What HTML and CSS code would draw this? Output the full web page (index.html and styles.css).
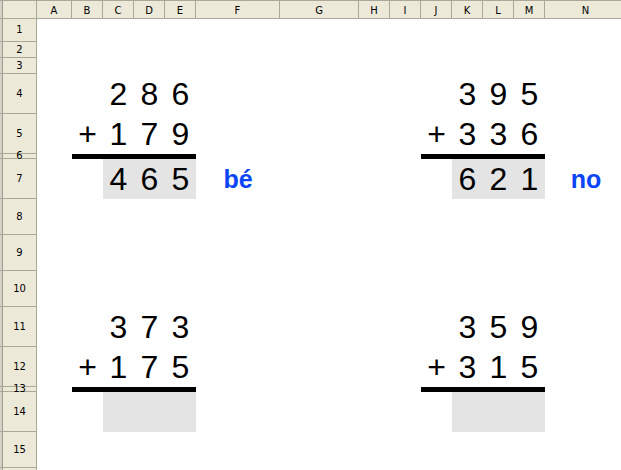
FILE: index.html
```html
<!DOCTYPE html>
<html>
<head>
<meta charset="utf-8">
<link rel="stylesheet" href="styles.css">
</head>
<body>
<div class="sheet">
  <div class="row hrow">
    <div class="hd corner"></div>
    <div class="hd">A</div><div class="hd">B</div><div class="hd">C</div><div class="hd">D</div><div class="hd">E</div>
    <div class="hd">F</div><div class="hd">G</div><div class="hd">H</div><div class="hd">I</div><div class="hd">J</div>
    <div class="hd">K</div><div class="hd">L</div><div class="hd">M</div><div class="hd">N</div>
  </div>
  <div class="row r1"><div class="rh">1</div></div>
  <div class="row r2"><div class="rh">2</div></div>
  <div class="row r3"><div class="rh">3</div></div>
  <div class="row r4"><div class="rh">4</div>
    <div class="cell num cC">2</div><div class="cell num cD">8</div><div class="cell num cE">6</div>
    <div class="cell num cK">3</div><div class="cell num cL">9</div><div class="cell num cM">5</div>
  </div>
  <div class="row r5"><div class="rh">5</div>
    <div class="cell num cB">+</div><div class="cell num cC">1</div><div class="cell num cD">7</div><div class="cell num cE">9</div>
    <div class="cell num cJ">+</div><div class="cell num cK">3</div><div class="cell num cL">3</div><div class="cell num cM">6</div>
  </div>
  <div class="row r6"><div class="rh">6</div>
    <div class="bar barL"></div><div class="bar barR"></div>
  </div>
  <div class="row r7"><div class="rh">7</div>
    <div class="cell num fill cC">4</div><div class="cell num fill cD">6</div><div class="cell num fill cE">5</div>
    <div class="cell verdict cF">bé</div>
    <div class="cell num fill cK">6</div><div class="cell num fill cL">2</div><div class="cell num fill cM">1</div>
    <div class="cell verdict cN">no</div>
  </div>
  <div class="row r8"><div class="rh">8</div></div>
  <div class="row r9"><div class="rh">9</div></div>
  <div class="row r10"><div class="rh">10</div></div>
  <div class="row r11"><div class="rh">11</div>
    <div class="cell num cC">3</div><div class="cell num cD">7</div><div class="cell num cE">3</div>
    <div class="cell num cK">3</div><div class="cell num cL">5</div><div class="cell num cM">9</div>
  </div>
  <div class="row r12"><div class="rh">12</div>
    <div class="cell num cB">+</div><div class="cell num cC">1</div><div class="cell num cD">7</div><div class="cell num cE">5</div>
    <div class="cell num cJ">+</div><div class="cell num cK">3</div><div class="cell num cL">1</div><div class="cell num cM">5</div>
  </div>
  <div class="row r13"><div class="rh">13</div>
    <div class="bar barL"></div><div class="bar barR"></div>
  </div>
  <div class="row r14"><div class="rh">14</div>
    <div class="cell fill cC"></div><div class="cell fill cD"></div><div class="cell fill cE"></div>
    <div class="cell fill cK"></div><div class="cell fill cL"></div><div class="cell fill cM"></div>
  </div>
  <div class="row r15"><div class="rh">15</div></div>
  <div class="row r16"><div class="rh"></div></div>
</div>
</body>
</html>
```
FILE: styles.css
```css
html, body {
  margin: 0;
  padding: 0;
  background: #ffffff;
}
.sheet {
  width: 621px;
  height: 470px;
  overflow: hidden;
  background: #ffffff;
}
.row {
  display: grid;
  grid-template-columns: 37px 35px 31px 31px 31px 31px 84px 79px 31px 31px 31px 31px 31px 31px 82px;
  grid-template-rows: 100%;
  width: 627px;
}
.hrow { height: 19px; }
.r1 { height: 23px; }
.r2, .r3 { height: 16px; }
.r4, .r5, .r7, .r11, .r12, .r14 { height: 40px; }
.r6, .r13 { height: 5px; }
.r8, .r9, .r10, .r15 { height: 36px; }
.r16 { height: 20px; }

.hd, .rh {
  box-sizing: border-box;
  background: #ece9d8;
  font-family: "DejaVu Sans", Verdana, sans-serif;
  font-size: 10px;
  color: #000;
  display: flex;
  align-items: center;
  justify-content: center;
  border-right: 1px solid #aca899;
  border-bottom: 1px solid #aca899;
}
.hd {
  border-top: 1px solid #aca899;
  padding-top: 1px;
}
.corner, .rh {
  box-shadow: inset 2px 0 0 #d6d3c6, inset 3px 0 0 #9c998d;
  padding-left: 3px;
}
.rh {
  grid-column: 1;
  overflow: visible;
  line-height: 1;
  position: relative;
  z-index: 1;
  white-space: nowrap;
}

.cell {
  grid-row: 1;
  display: flex;
  align-items: flex-end;
  justify-content: center;
  box-sizing: border-box;
}
.num {
  font-family: "Liberation Sans", Arial, sans-serif;
  font-size: 32px;
  line-height: 32px;
  padding-bottom: 4px;
  color: #000;
}
.fill { background: #e4e4e4; }
.verdict {
  font-family: "Liberation Sans", Arial, sans-serif;
  font-weight: bold;
  font-size: 25px;
  line-height: 25px;
  padding-bottom: 7px;
  color: #0a46f5;
}
.bar {
  grid-row: 1;
  background: #000;
}
.barL { grid-column: 3 / 7; }
.barR { grid-column: 11 / 15; }

.cB { grid-column: 3; }
.cC { grid-column: 4; }
.cD { grid-column: 5; }
.cE { grid-column: 6; }
.cF { grid-column: 7; }
.cJ { grid-column: 11; }
.cK { grid-column: 12; }
.cL { grid-column: 13; }
.cM { grid-column: 14; }
.cN { grid-column: 15; }
```
